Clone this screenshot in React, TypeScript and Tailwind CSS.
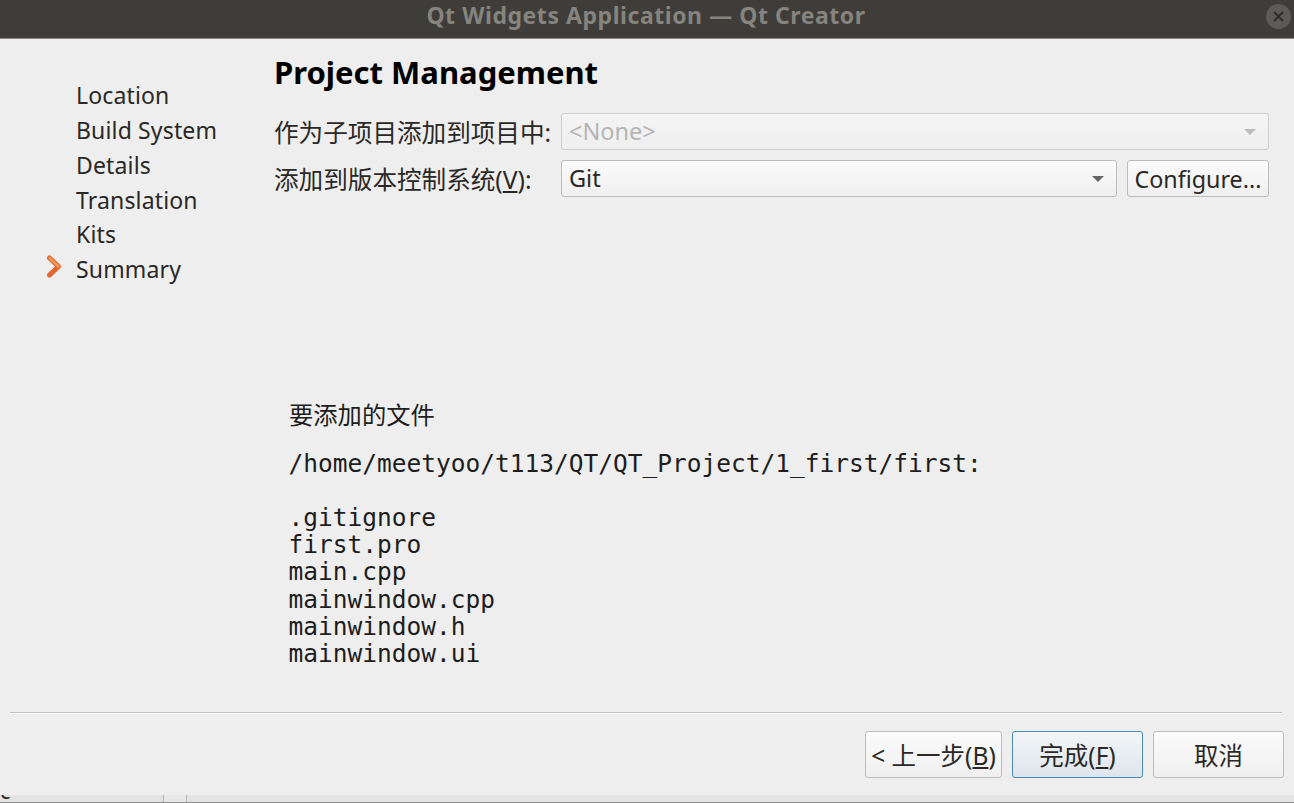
const ui = { fontFamily: '"Noto Sans","Noto Sans CJK SC",sans-serif' };

function Arrow({ color }: { color: string }) {
  return (
    <svg width="12" height="6" viewBox="0 0 12 6" className="shrink-0">
      <path d="M0 0H12L6 6Z" fill={color} />
    </svg>
  );
}

function Step({ label, active }: { label: string; active?: boolean }) {
  return (
    <div className="relative h-[34.8px] pl-[76px] flex items-center text-[23px] tracking-[0.15px] text-[#2a2826]">
      {active && (
        <svg width="18" height="24" viewBox="0 0 18 24" className="absolute left-[45px] top-[3px]">
          <path d="M4.5 3L13.5 11.5L4.5 20" fill="none" stroke="#e2662f" strokeWidth="5" strokeLinecap="round" strokeLinejoin="round" />
          <path d="M4.5 3L13.5 11.5" fill="none" stroke="#ee9a5c" strokeWidth="2.5" strokeLinecap="round" />
        </svg>
      )}
      {label}
    </div>
  );
}

function Btn({ children, primary, w }: { children: React.ReactNode; primary?: boolean; w: string }) {
  return (
    <div
      className={`${w} h-[47px] pt-[3px] flex items-center justify-center rounded-[3px] border text-[24.5px] text-[#2a2826] whitespace-nowrap ${
        primary
          ? "border-[#4a8ab5] bg-gradient-to-b from-[#f4f6f8] to-[#dde5ec]"
          : "border-[#bcbcbc] bg-gradient-to-b from-[#fbfbfb] to-[#efefef]"
      }`}
    >
      {children}
    </div>
  );
}

export default function App() {
  return (
    <div className="w-[1294px] h-[803px] overflow-hidden bg-[#eeeeee] flex flex-col" style={ui}>
      <div className="h-[39px] shrink-0 bg-[#3f3d39] border-b border-[#8a8984] flex items-center relative">
        <div className="w-full text-center text-[23px] font-bold tracking-[0.55px] text-[#86847e] -mt-[8px] -ml-[1px]">Qt Widgets Application — Qt Creator</div>
        <div className="absolute right-[3px] top-[4px] w-[25px] h-[25px] rounded-full bg-[#5d5b57] flex items-center justify-center">
          <svg width="11" height="11" viewBox="0 0 11 11">
            <path d="M1 1L10 10M10 1L1 10" stroke="#2f2d2a" strokeWidth="2" />
          </svg>
        </div>
      </div>

      <div className="flex-1 flex min-h-0">
        <div className="w-[274px] shrink-0 pt-[39px]">
          {["Location", "Build System", "Details", "Translation", "Kits"].map((s) => (
            <Step key={s} label={s} />
          ))}
          <Step label="Summary" active />
        </div>

        <div className="flex-1 min-w-0 pr-[25px] pt-[13px] flex flex-col">
          <div className="text-[31px] leading-[40px] font-bold text-black">Project Management</div>

          <div className="mt-[21px] flex items-center h-[37px]">
            <div className="w-[287px] shrink-0 pt-[3px] text-[24.6px] text-[#2a2826] whitespace-nowrap">作为子项目添加到项目中:</div>
            <div className="flex-1 h-[37px] pt-[1px] rounded-[3px] border border-[#d0d0d0] bg-gradient-to-b from-[#f4f4f4] to-[#efefef] flex items-center justify-between pl-[7px] pr-[12px] text-[23.5px] text-[#b5b5b5]">
              <span>&lt;None&gt;</span>
              <Arrow color="#bdbdbd" />
            </div>
          </div>

          <div className="mt-[10px] flex items-center h-[37px]">
            <div className="w-[287px] shrink-0 pt-[3px] text-[24.6px] text-[#2a2826] whitespace-nowrap">
              添加到版本控制系统(<span className="underline">V</span>):
            </div>
            <div className="flex-1 h-[37px] pt-[1px] rounded-[3px] border border-[#bcbcbc] bg-gradient-to-b from-[#fbfbfb] to-[#efefef] flex items-center justify-between pl-[7px] pr-[12px] text-[23.5px] text-[#2a2826]">
              <span>Git</span>
              <Arrow color="#666666" />
            </div>
            <div className="ml-[10px] w-[142px] h-[37px] pt-[1px] rounded-[3px] border border-[#bcbcbc] bg-gradient-to-b from-[#fbfbfb] to-[#efefef] flex items-center justify-center text-[23.3px] text-[#2a2826] whitespace-nowrap">
              Configure...
            </div>
          </div>

          <div className="mt-[203px] pl-[15px] text-[24.3px] leading-[30px] text-[#1d1d1d]">要添加的文件</div>
          <div
            className="mt-[19.5px] pl-[14.5px] text-[24.5px] leading-[27.2px] text-[#1d1d1d] whitespace-pre"
            style={{ fontFamily: '"DejaVu Sans Mono",monospace' }}
          >
            {"/home/meetyoo/t113/QT/QT_Project/1_first/first:\n\n.gitignore\nfirst.pro\nmain.cpp\nmainwindow.cpp\nmainwindow.h\nmainwindow.ui"}
          </div>
        </div>
      </div>

      <div className="shrink-0 h-[91px] px-[10px] pt-[8px]">
        <div className="h-[1px] mr-[2px] bg-[#c0c0c0] shadow-[0_1px_0_#ffffff]" />
        <div className="mt-[18px] flex justify-end gap-[10px]">
          <Btn w="w-[137px]">&lt; 上一步(<span className="underline">B</span>)</Btn>
          <Btn w="w-[131px]" primary>完成(<span className="underline">F</span>)</Btn>
          <Btn w="w-[131px]">取消</Btn>
        </div>
      </div>

      <div className="shrink-0 h-[8px] bg-[#e3e3e3] border-b border-[#8f8f8f] flex overflow-hidden">
        <div className="w-[163px] shrink-0 text-[22px] leading-[8px] -mt-[9px] text-[#2a2826]">c</div>
        <div className="w-[24px] h-full border-x border-[#b5b5b5] bg-[#e8e8e8]" />
      </div>
    </div>
  );
}
